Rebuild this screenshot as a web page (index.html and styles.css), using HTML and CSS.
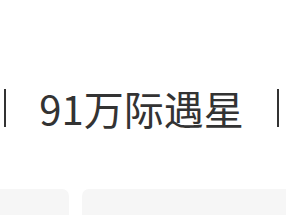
FILE: index.html
```html
<!DOCTYPE html>
<html lang="zh">
<head>
    <meta charset="UTF-8">
    <title>91万际遇星</title>
    <meta name="viewport" content="width=device-width, initial-scale=1.0">
    <link rel="stylesheet" href="styles.css">
</head>
<body>

<div class="page">
    <div class="title-row">
        <span class="bar"></span>
        <h2 class="title">91万际遇星</h2>
        <span class="bar"></span>
    </div>

    <div class="cards">
        <div class="card card-left"></div>
        <div class="card card-right"></div>
    </div>
</div>

</body>
</html>
```

FILE: styles.css
```css
body {
    font-family: "Noto Sans CJK SC", "Noto Sans", sans-serif;
    margin: 0;
    background: #fff;
    color: #333;
}

.page {
    padding-top: 89px;
    height: 126px;
    overflow: hidden;
}

.title-row {
    display: flex;
    align-items: center;
    justify-content: space-between;
    padding: 0 7px 0 4px;
    height: 38px;
}

.bar {
    width: 2px;
    height: 38px;
    background: #333;
}

.title {
    margin: 0;
    font-size: 40px;
    font-weight: normal;
    line-height: 38px;
    color: #333;
}

.cards {
    display: grid;
    grid-template-columns: 69px 1fr;
    gap: 13px;
    margin-top: 62px;
}

.card {
    height: 26px;
    background: #f6f6f6;
    border-radius: 7px 7px 0 0;
}

.card-left {
    border-top-left-radius: 0;
}

.card-right {
    border-top-right-radius: 0;
}
```
